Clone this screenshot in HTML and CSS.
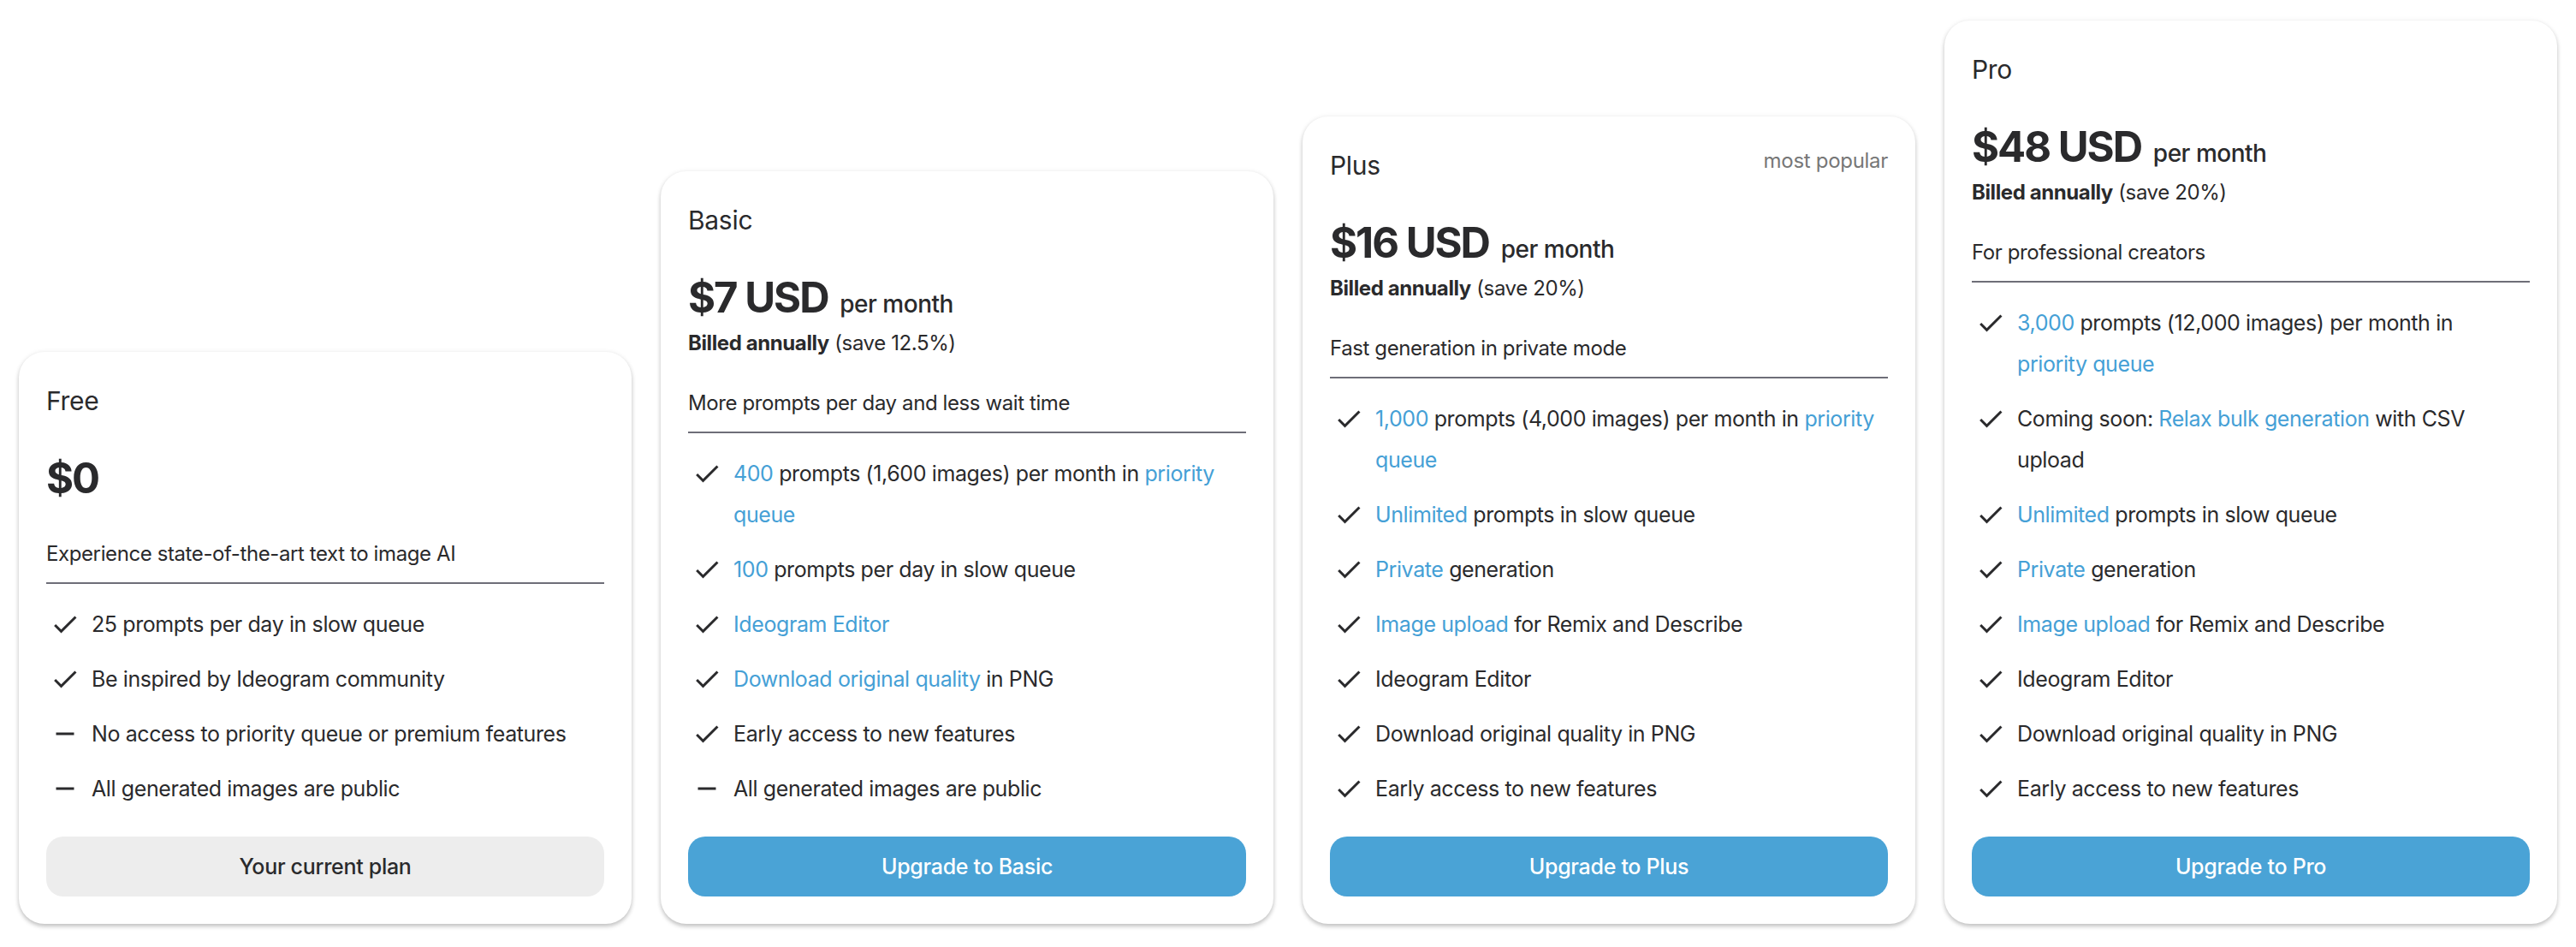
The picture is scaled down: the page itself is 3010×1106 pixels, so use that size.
FILE: index.html
```html
<!DOCTYPE html>
<html lang="en">
<head>
    <meta charset="UTF-8">
    <meta name="viewport" content="width=device-width, initial-scale=1.0">
    <title>Plans</title>
    <link rel="stylesheet" href="styles.css">
</head>
<body>
    <main class="plans">
        <!-- Free -->
        <section class="plan">
            <div class="plan-head">
                <h2 class="plan-name">Free</h2>
            </div>
            <div class="plan-price">
                <span class="amount">$0</span>
            </div>
            <p class="plan-desc plan-desc-free">Experience state-of-the-art text to image AI</p>
            <ul class="features">
                <li><svg class="ico" viewBox="0 0 24 24"><path d="M9 16.17 4.83 12l-1.42 1.41L9 19 21 7l-1.41-1.41z"/></svg><span>25 prompts per day in slow queue</span></li>
                <li><svg class="ico" viewBox="0 0 24 24"><path d="M9 16.17 4.83 12l-1.42 1.41L9 19 21 7l-1.41-1.41z"/></svg><span>Be inspired by Ideogram community</span></li>
                <li><svg class="ico" viewBox="0 0 24 24"><path d="M19 13H5v-2h14v2z"/></svg><span>No access to priority queue or premium features</span></li>
                <li><svg class="ico" viewBox="0 0 24 24"><path d="M19 13H5v-2h14v2z"/></svg><span>All generated images are public</span></li>
            </ul>
            <button class="btn btn-current">Your current plan</button>
        </section>

        <!-- Basic -->
        <section class="plan">
            <div class="plan-head">
                <h2 class="plan-name">Basic</h2>
            </div>
            <div class="plan-price">
                <span class="amount">$7 USD</span>
                <span class="period">per month</span>
            </div>
            <p class="billed"><b>Billed annually</b> (save 12.5%)</p>
            <p class="plan-desc">More prompts per day and less wait time</p>
            <ul class="features">
                <li><svg class="ico" viewBox="0 0 24 24"><path d="M9 16.17 4.83 12l-1.42 1.41L9 19 21 7l-1.41-1.41z"/></svg><span><span class="hl">400</span> prompts (1,600 images) per month in <span class="hl">priority queue</span></span></li>
                <li><svg class="ico" viewBox="0 0 24 24"><path d="M9 16.17 4.83 12l-1.42 1.41L9 19 21 7l-1.41-1.41z"/></svg><span><span class="hl">100</span> prompts per day in slow queue</span></li>
                <li><svg class="ico" viewBox="0 0 24 24"><path d="M9 16.17 4.83 12l-1.42 1.41L9 19 21 7l-1.41-1.41z"/></svg><span class="hl">Ideogram Editor</span></li>
                <li><svg class="ico" viewBox="0 0 24 24"><path d="M9 16.17 4.83 12l-1.42 1.41L9 19 21 7l-1.41-1.41z"/></svg><span><span class="hl">Download original quality</span> in PNG</span></li>
                <li><svg class="ico" viewBox="0 0 24 24"><path d="M9 16.17 4.83 12l-1.42 1.41L9 19 21 7l-1.41-1.41z"/></svg><span>Early access to new features</span></li>
                <li><svg class="ico" viewBox="0 0 24 24"><path d="M19 13H5v-2h14v2z"/></svg><span>All generated images are public</span></li>
            </ul>
            <button class="btn btn-upgrade">Upgrade to Basic</button>
        </section>

        <!-- Plus -->
        <section class="plan">
            <div class="plan-head">
                <h2 class="plan-name">Plus</h2>
                <span class="badge">most popular</span>
            </div>
            <div class="plan-price">
                <span class="amount">$16 USD</span>
                <span class="period">per month</span>
            </div>
            <p class="billed"><b>Billed annually</b> (save 20%)</p>
            <p class="plan-desc">Fast generation in private mode</p>
            <ul class="features">
                <li><svg class="ico" viewBox="0 0 24 24"><path d="M9 16.17 4.83 12l-1.42 1.41L9 19 21 7l-1.41-1.41z"/></svg><span><span class="hl">1,000</span> prompts (4,000 images) per month in <span class="hl">priority queue</span></span></li>
                <li><svg class="ico" viewBox="0 0 24 24"><path d="M9 16.17 4.83 12l-1.42 1.41L9 19 21 7l-1.41-1.41z"/></svg><span><span class="hl">Unlimited</span> prompts in slow queue</span></li>
                <li><svg class="ico" viewBox="0 0 24 24"><path d="M9 16.17 4.83 12l-1.42 1.41L9 19 21 7l-1.41-1.41z"/></svg><span><span class="hl">Private</span> generation</span></li>
                <li><svg class="ico" viewBox="0 0 24 24"><path d="M9 16.17 4.83 12l-1.42 1.41L9 19 21 7l-1.41-1.41z"/></svg><span><span class="hl">Image upload</span> for Remix and Describe</span></li>
                <li><svg class="ico" viewBox="0 0 24 24"><path d="M9 16.17 4.83 12l-1.42 1.41L9 19 21 7l-1.41-1.41z"/></svg><span>Ideogram Editor</span></li>
                <li><svg class="ico" viewBox="0 0 24 24"><path d="M9 16.17 4.83 12l-1.42 1.41L9 19 21 7l-1.41-1.41z"/></svg><span>Download original quality in PNG</span></li>
                <li><svg class="ico" viewBox="0 0 24 24"><path d="M9 16.17 4.83 12l-1.42 1.41L9 19 21 7l-1.41-1.41z"/></svg><span>Early access to new features</span></li>
            </ul>
            <button class="btn btn-upgrade">Upgrade to Plus</button>
        </section>

        <!-- Pro -->
        <section class="plan">
            <div class="plan-head">
                <h2 class="plan-name">Pro</h2>
            </div>
            <div class="plan-price">
                <span class="amount">$48 USD</span>
                <span class="period">per month</span>
            </div>
            <p class="billed"><b>Billed annually</b> (save 20%)</p>
            <p class="plan-desc">For professional creators</p>
            <ul class="features">
                <li><svg class="ico" viewBox="0 0 24 24"><path d="M9 16.17 4.83 12l-1.42 1.41L9 19 21 7l-1.41-1.41z"/></svg><span><span class="hl">3,000</span> prompts (12,000 images) per month in <span class="hl nowrap">priority queue</span></span></li>
                <li><svg class="ico" viewBox="0 0 24 24"><path d="M9 16.17 4.83 12l-1.42 1.41L9 19 21 7l-1.41-1.41z"/></svg><span>Coming soon: <span class="hl">Relax bulk generation</span> with CSV upload</span></li>
                <li><svg class="ico" viewBox="0 0 24 24"><path d="M9 16.17 4.83 12l-1.42 1.41L9 19 21 7l-1.41-1.41z"/></svg><span><span class="hl">Unlimited</span> prompts in slow queue</span></li>
                <li><svg class="ico" viewBox="0 0 24 24"><path d="M9 16.17 4.83 12l-1.42 1.41L9 19 21 7l-1.41-1.41z"/></svg><span><span class="hl">Private</span> generation</span></li>
                <li><svg class="ico" viewBox="0 0 24 24"><path d="M9 16.17 4.83 12l-1.42 1.41L9 19 21 7l-1.41-1.41z"/></svg><span><span class="hl">Image upload</span> for Remix and Describe</span></li>
                <li><svg class="ico" viewBox="0 0 24 24"><path d="M9 16.17 4.83 12l-1.42 1.41L9 19 21 7l-1.41-1.41z"/></svg><span>Ideogram Editor</span></li>
                <li><svg class="ico" viewBox="0 0 24 24"><path d="M9 16.17 4.83 12l-1.42 1.41L9 19 21 7l-1.41-1.41z"/></svg><span>Download original quality in PNG</span></li>
                <li><svg class="ico" viewBox="0 0 24 24"><path d="M9 16.17 4.83 12l-1.42 1.41L9 19 21 7l-1.41-1.41z"/></svg><span>Early access to new features</span></li>
            </ul>
            <button class="btn btn-upgrade">Upgrade to Pro</button>
        </section>
    </main>
</body>
</html>
```

FILE: styles.css
```css
/* General */
body {
    margin: 0;
    font-family: Inter, "Liberation Sans", sans-serif;
    color: #2a2a2c;
    background: #fff;
}

.plans {
    display: flex;
    align-items: flex-end;
    gap: 34px;
    height: 100vh;
    box-sizing: border-box;
    padding: 24px 22px 27px;
}

/* Card */
.plan {
    flex: 1;
    min-width: 0;
    background: #fff;
    border-radius: 30px;
    padding: 32px;
    box-shadow: 0 3px 5px rgba(0, 0, 0, 0.22), 0 0 6px rgba(0, 0, 0, 0.06);
}

.plan-head {
    display: flex;
    justify-content: space-between;
    align-items: flex-start;
}

.plan-name {
    margin: 0;
    font-size: 30px;
    font-weight: 400;
    line-height: 50px;
    letter-spacing: -0.3px;
}

.badge {
    font-size: 24px;
    line-height: 34px;
    margin-top: 3px;
    color: #777;
    letter-spacing: -0.3px;
}

.plan-price {
    margin-top: 36px;
    font-size: 49px;
    line-height: 60px;
    white-space: nowrap;
}

.amount {
    font-weight: 700;
    letter-spacing: -2px;
}

.period {
    font-size: 28px;
    font-weight: 500;
    line-height: 1;
    letter-spacing: -0.5px;
}

.billed {
    margin: 6px 0 0;
    font-size: 24px;
    line-height: 34px;
    letter-spacing: -0.4px;
}

.billed b {
    font-weight: 700;
}

.plan-desc {
    margin: 36px 0 0;
    padding-bottom: 16px;
    border-bottom: 2px solid #6e6e78;
    font-size: 24px;
    line-height: 34px;
    letter-spacing: -0.4px;
}

.plan-desc-free {
    margin-top: 41px;
}

/* Feature list */
.features {
    list-style: none;
    margin: 23px 0 0;
    padding: 0;
}

.features li {
    display: flex;
    align-items: flex-start;
    font-size: 25px;
    line-height: 48px;
    letter-spacing: -0.4px;
}

.features li + li {
    margin-top: 16px;
}

.ico {
    flex: none;
    width: 36px;
    height: 36px;
    margin: 6px 13px 0 4px;
    fill: #2a2a2c;
}

.hl {
    color: #45a0d6;
}

.nowrap {
    white-space: nowrap;
}

/* Buttons */
.btn {
    display: block;
    width: 100%;
    height: 70px;
    margin-top: 32px;
    border: none;
    border-radius: 20px;
    font-family: inherit;
    font-size: 25px;
    font-weight: 500;
    letter-spacing: -0.3px;
    cursor: pointer;
}

.btn-current {
    background: #ededed;
    color: #2a2a2c;
}

.btn-upgrade {
    background: #4aa3d6;
    color: #fff;
}
```
